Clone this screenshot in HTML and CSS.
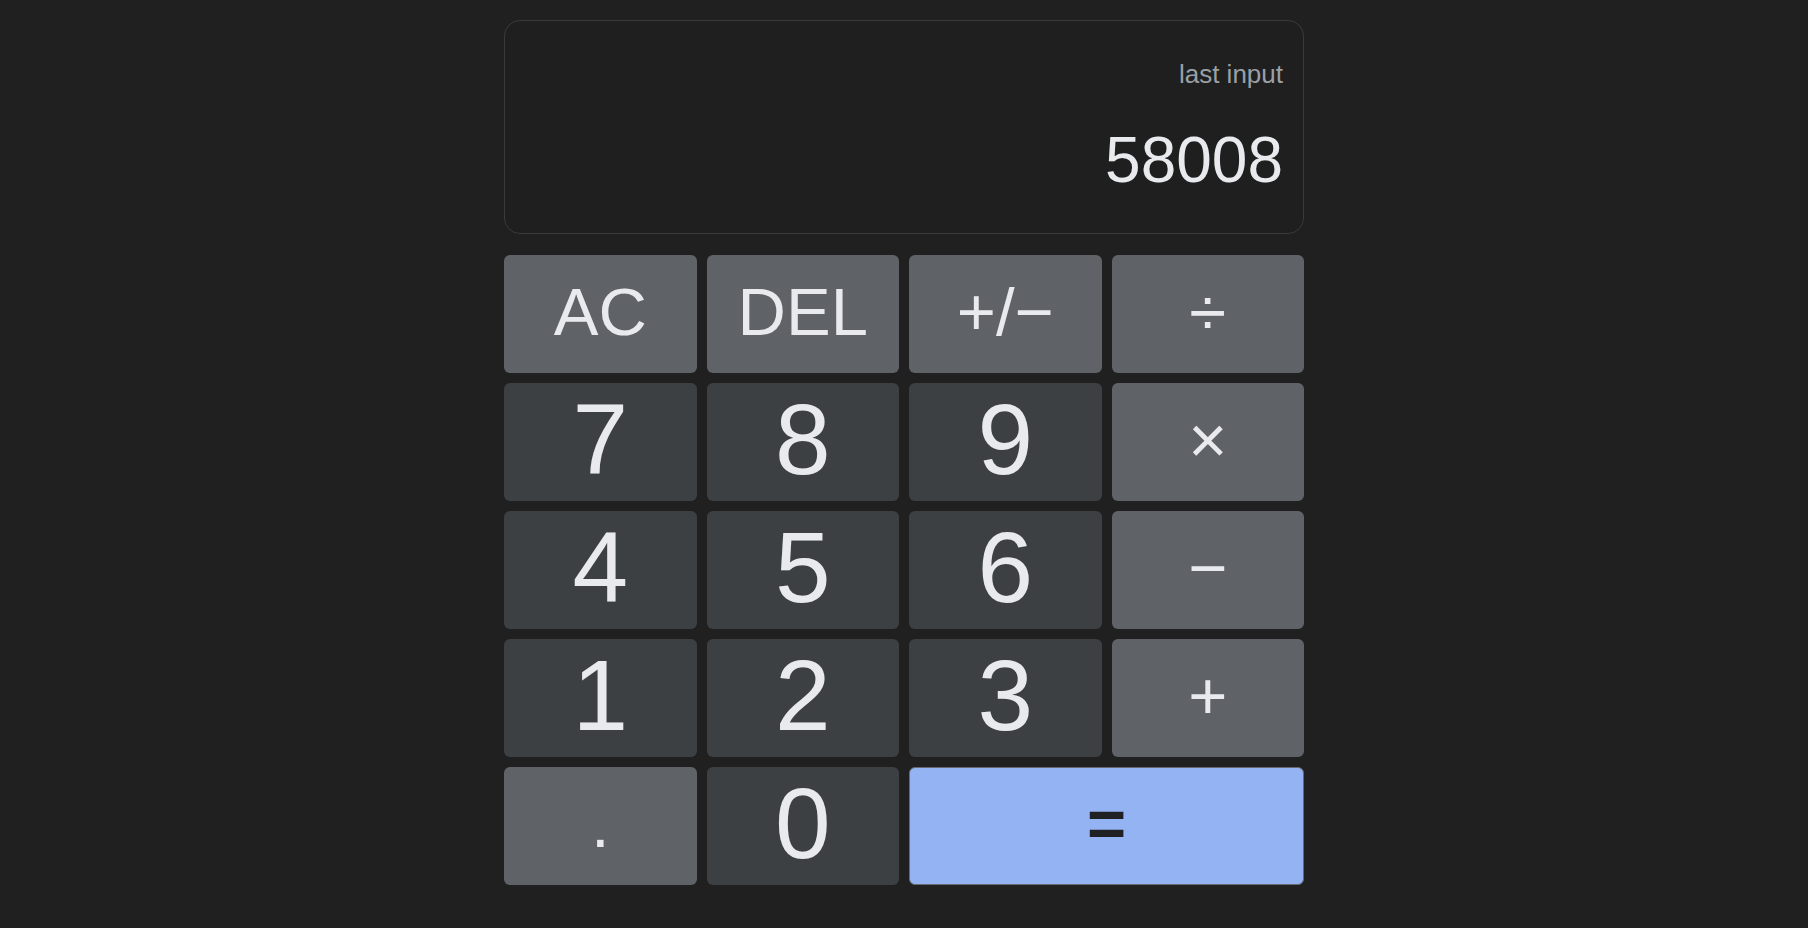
FILE: index.html
```html
<!DOCTYPE html>
<html lang="en">
<head>
<meta charset="utf-8">
<title>Calculator</title>
<link rel="stylesheet" href="styles.css">
</head>
<body>
<main class="calc">
  <section class="display">
    <div class="last">last input</div>
    <div class="value">58008</div>
  </section>
  <section class="keys">
    <button class="key op txt">AC</button>
    <button class="key op txt">DEL</button>
    <button class="key op txt">+/−</button>
    <button class="key op txt">÷</button>
    <button class="key num">7</button>
    <button class="key num">8</button>
    <button class="key num">9</button>
    <button class="key op txt">×</button>
    <button class="key num">4</button>
    <button class="key num">5</button>
    <button class="key num">6</button>
    <button class="key op txt">−</button>
    <button class="key num">1</button>
    <button class="key num">2</button>
    <button class="key num">3</button>
    <button class="key op txt">+</button>
    <button class="key op txt">.</button>
    <button class="key num">0</button>
    <button class="key eq txt">=</button>
  </section>
</main>
</body>
</html>
```
FILE: styles.css
```css
html, body {
  margin: 0;
  padding: 0;
  background: #202020;
  font-family: "Liberation Sans", Arial, sans-serif;
}
.calc {
  width: 800px;
  margin: 20px auto 0;
  display: flex;
  flex-direction: column;
  gap: 21px;
}
.display {
  border: 1px solid #3a3a3a;
  border-radius: 16px;
  background: #1f1f1f;
  padding: 38px 20px 36px;
  display: flex;
  flex-direction: column;
  align-items: flex-end;
  gap: 33px;
}
.last {
  font-size: 26px;
  color: #9aa0a6;
}
.value {
  font-size: 64px;
  color: #e8eaed;
}
.keys {
  display: grid;
  grid-template-columns: repeat(4, 1fr);
  grid-auto-rows: 118px;
  gap: 10px;
}
.key {
  border: none;
  border-radius: 6px;
  padding: 0 0 6px;
  margin: 0;
  font-family: "Liberation Sans", Arial, sans-serif;
  color: #e8eaed;
  display: flex;
  align-items: center;
  justify-content: center;
  line-height: normal;
}
.num {
  background: #3c4043;
  font-size: 100px;
}
.op {
  background: #5f6368;
}
.txt {
  font-size: 67px;
}
.eq {
  grid-column: span 2;
  background: #94b3f2;
  border: 1px solid #666a70;
  color: #202124;
  font-weight: bold;
}
```
